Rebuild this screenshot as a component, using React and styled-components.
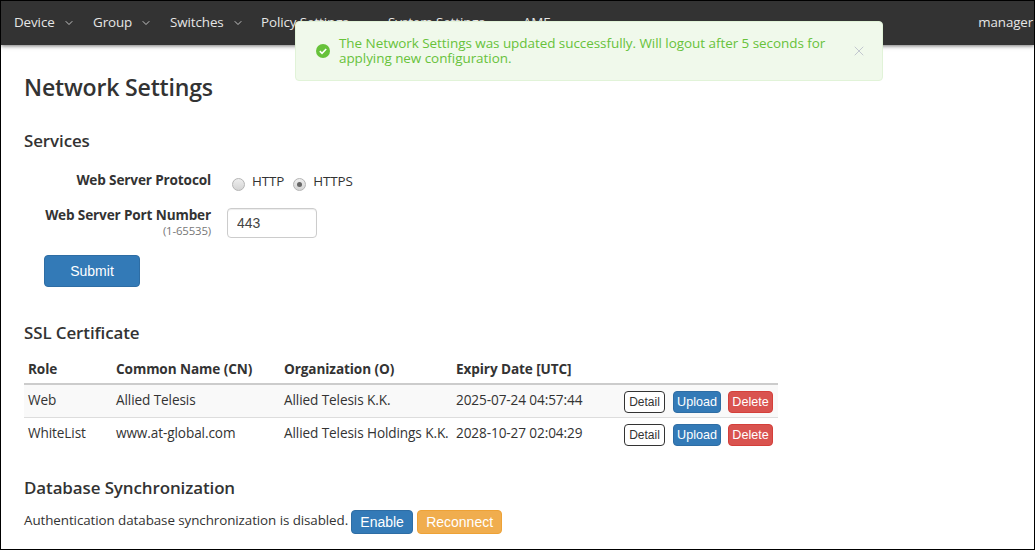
import React from "react";
import styled, { createGlobalStyle } from "styled-components";
import { ChevronDown, X } from "lucide-react";

const Global = createGlobalStyle`
  html, body { margin: 0; padding: 0; background: #fff; }
  body { font-family: "Open Sans", "Noto Sans", sans-serif; color: #333; }
  * { box-sizing: border-box; }
`;
const Page = styled.div`
  position: relative; width: 1035px; height: 550px; overflow: hidden;
  border: 1px solid #000; background: #fff;
`;
const Nav = styled.nav`
  display: flex; align-items: center; height: 44px; padding: 0 13px 2px;
  background: #333; box-shadow: 0 1px 4px rgba(0,0,0,.55); color: #e6e6e6;
  font-size: 13.4px; letter-spacing: -.1px;
`;
const NavItem = styled.span`
  display: inline-flex; align-items: center; width: ${p => p.$w}px; white-space: nowrap;
  svg { margin-left: 8px; margin-top: 2px; }
`;
const NavUser = styled.span` margin-left: auto; margin-right: -12px; font-size: 13.3px; white-space: nowrap; `;
const Alert = styled.div`
  position: absolute; left: 294px; top: 20px; width: 588px; height: 60px;
  display: flex; align-items: center; padding: 0 14px 0 20px;
  background: #f0f9eb; border: 1px solid #e1f3d8; border-radius: 4px; color: #67c23a;
  font-size: 13.48px; line-height: 15px; letter-spacing: -.05px;
`;
const AlertIcon = styled.svg` flex: none; width: 14px; height: 14px; margin-right: 9px; `;
const AlertText = styled.div` width: 500px; `;
const Close = styled.span` display: flex; margin-left: auto; margin-right: 1px; color: #c0c4cc; `;
const Main = styled.main` padding: 27px 23px 0; `;
const Title = styled.h1` margin: 0 0 28px; font-size: 23.1px; line-height: 30px; font-weight: 600; letter-spacing: -.2px; `;
const Section = styled.h2` margin: ${p => p.$mt || 0}px 0 0; font-size: 16.95px; line-height: 22px; font-weight: 600; letter-spacing: -.1px; `;
const Row = styled.div` display: flex; align-items: ${p => p.$align || "center"}; margin-top: ${p => p.$mt}px; `;
const Label = styled.div` width: 187px; text-align: right; font-size: 13.6px; font-weight: 700; line-height: 16px; letter-spacing: -.15px; `;
const Hint = styled.div` font-size: 11.4px; font-weight: 400; color: #777; line-height: 15px; `;
const Radios = styled.div` display: flex; align-items: center; margin: 2px 0 0 21px; font-size: 13.4px; letter-spacing: -.1px; `;
const Radio = styled.span`
  position: relative; width: 13px; height: 13px; border-radius: 50%; margin: 7px 7px 0 ${p => p.$ml}px;
  border: 1px solid #b4b4b4; background: linear-gradient(#eee, #d4d4d4);
  ${p => p.$on && `&::after { content: ""; position: absolute; left: 3px; top: 3px; width: 5px; height: 5px; border-radius: 50%; background: #666; }`}
`;
const Input = styled.input`
  width: 90px; height: 30px; margin: 1px 0 0 16px; padding: 0 9px; border: 1px solid #ccc; border-radius: 4px;
  font: 14px "Liberation Sans", Arial, sans-serif; color: #444; box-shadow: inset 0 1px 1px rgba(0,0,0,.075);
`;
const Btn = styled.button`
  font-family: "Liberation Sans", Arial, sans-serif; color: #fff; cursor: pointer;
  background: ${p => p.$bg}; border: 1px solid ${p => p.$bd}; border-radius: 4px;
  width: ${p => p.$w}px; height: ${p => p.$h}px; font-size: ${p => p.$fs}px; padding: 0;
`;
const OutlineBtn = styled(Btn)` color: #333; background: #fff; border-color: #333; margin-right: 1px; `;
const SubmitWrap = styled.div` margin: 17px 0 35px 20px; `;
const Table = styled.table`
  width: 754px; table-layout: fixed; border-collapse: collapse; font-size: 13.6px; letter-spacing: -.1px; margin-top: 9px;
  th { text-align: left; font-weight: 700; padding: 0 4px; height: 31px; border-bottom: 2px solid #ccc; }
  td { padding: 0 4px 4px; height: 33px; border-bottom: 1px solid #ddd; white-space: nowrap; }
  tbody tr:nth-child(odd) { background: #f9f9f9; }
  tbody tr:last-child td { border-bottom: 0; }
`;
const ActionCell = styled.td`
  && { padding: 6px 4px 4px; vertical-align: top; }
`;
const Actions = styled.div` display: flex; gap: 7px; `;
const SyncRow = styled.div` display: flex; align-items: center; gap: 3px; margin-top: 11px; font-size: 13.4px; letter-spacing: -.08px; `;
const SyncText = styled.span` padding-bottom: 4px; `;
const SyncBtns = styled.div` display: flex; gap: 4px; `;
const ColRole = styled.th` width: 88px; `;
const ColName = styled.th` width: 168px; `;
const ColOrg = styled.th` width: 172px; `;
const ColDate = styled.th` width: 168px; `;

const CERTS = [
  ["Web", "Allied Telesis", "Allied Telesis K.K.", "2025-07-24 04:57:44"],
  ["WhiteList", "www.at-global.com", "Allied Telesis Holdings K.K.", "2028-10-27 02:04:29"],
];
const NAV = [["Device", 79], ["Group", 77], ["Switches", 91], ["Policy Settings", 127], ["System Settings", 135], ["AMF", 60]];

export default function App() {
  return (
    <Page>
      <Global />
      <Nav>
        {NAV.map(([t, w]) => (
          <NavItem key={t} $w={w}>{t}<ChevronDown size={12} strokeWidth={1.6} /></NavItem>
        ))}
        <NavUser>manager</NavUser>
      </Nav>
      <Alert>
        <AlertIcon viewBox="0 0 14 14">
          <circle cx="7" cy="7" r="7" fill="#67c23a" />
          <path d="M3.8 7.2 6 9.3l4.2-4.3" fill="none" stroke="#fff" strokeWidth="1.6" />
        </AlertIcon>
        <AlertText>The Network Settings was updated successfully. Will logout after 5 seconds for applying new configuration.</AlertText>
        <Close><X size={16} strokeWidth={1.4} /></Close>
      </Alert>
      <Main>
        <Title>Network Settings</Title>
        <Section>Services</Section>
        <Row $mt={17}>
          <Label>Web Server Protocol</Label>
          <Radios>
            <Radio $ml={0} />HTTP
            <Radio $ml={9} $on />HTTPS
          </Radios>
        </Row>
        <Row $mt={16} $align="flex-start">
          <Label>Web Server Port Number<Hint>(1-65535)</Hint></Label>
          <Input defaultValue="443" />
        </Row>
        <SubmitWrap>
          <Btn $bg="#337ab7" $bd="#2e6da4" $w={96} $h={32} $fs={14}>Submit</Btn>
        </SubmitWrap>
        <Section>SSL Certificate</Section>
        <Table>
          <thead>
            <tr><ColRole>Role</ColRole><ColName>Common Name (CN)</ColName><ColOrg>Organization (O)</ColOrg><ColDate>Expiry Date [UTC]</ColDate><th /></tr>
          </thead>
          <tbody>
            {CERTS.map(c => (
              <tr key={c[0]}>
                {c.map(v => <td key={v}>{v}</td>)}
                <ActionCell>
                  <Actions>
                    <OutlineBtn $w={41} $h={22} $fs={12}>Detail</OutlineBtn>
                    <Btn $bg="#337ab7" $bd="#2e6da4" $w={48} $h={22} $fs={12.6}>Upload</Btn>
                    <Btn $bg="#d9534f" $bd="#d43f3a" $w={45} $h={22} $fs={12.6}>Delete</Btn>
                  </Actions>
                </ActionCell>
              </tr>
            ))}
          </tbody>
        </Table>
        <Section $mt={26}>Database Synchronization</Section>
        <SyncRow>
          <SyncText>Authentication database synchronization is disabled.</SyncText>
          <SyncBtns>
            <Btn $bg="#337ab7" $bd="#2e6da4" $w={62} $h={24} $fs={14}>Enable</Btn>
            <Btn $bg="#f0ad4e" $bd="#eea236" $w={85} $h={24} $fs={14}>Reconnect</Btn>
          </SyncBtns>
        </SyncRow>
      </Main>
    </Page>
  );
}
